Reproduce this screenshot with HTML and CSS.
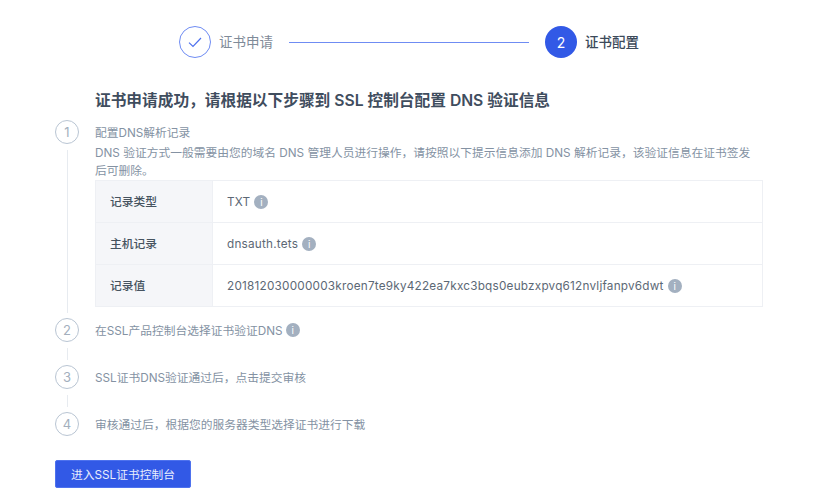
FILE: index.html
```html
<!DOCTYPE html>
<html lang="zh-CN">
<head>
<meta charset="utf-8">
<title>证书配置</title>
<link rel="stylesheet" href="styles.css">
</head>
<body>
<div class="stepper">
  <div class="stage stage-done">
    <span class="stage-dot">
      <svg class="check" viewBox="0 0 14 11" width="14" height="11"><path d="M1 5.6 L5 9.4 L13 1" fill="none" stroke="#4d70ee" stroke-width="1.2"/></svg>
    </span>
    <span class="stage-label">证书申请</span>
  </div>
  <div class="stage-line"></div>
  <div class="stage stage-active">
    <span class="stage-dot">2</span>
    <span class="stage-label">证书配置</span>
  </div>
</div>
<main class="content">
  <h1 class="title">证书申请成功，请根据以下步骤到 SSL 控制台配置 DNS 验证信息</h1>
  <ol class="steps">
    <li class="step step-first">
      <div class="rail"><span class="num">1</span><span class="conn"></span></div>
      <div class="body">
        <div class="step-head">配置DNS解析记录</div>
        <p class="desc">DNS 验证方式一般需要由您的域名 DNS 管理人员进行操作，请按照以下提示信息添加 DNS 解析记录，该验证信息在证书签发后可删除。</p>
        <table class="records">
          <tr><th>记录类型</th><td>TXT<i class="info">i</i></td></tr>
          <tr><th>主机记录</th><td>dnsauth.tets<i class="info">i</i></td></tr>
          <tr><th>记录值</th><td>201812030000003kroen7te9ky422ea7kxc3bqs0eubzxpvq612nvljfanpv6dwt<i class="info">i</i></td></tr>
        </table>
      </div>
    </li>
    <li class="step">
      <div class="rail"><span class="num">2</span><span class="conn"></span></div>
      <div class="body"><div class="step-head">在SSL产品控制台选择证书验证DNS<i class="info">i</i></div></div>
    </li>
    <li class="step">
      <div class="rail"><span class="num">3</span><span class="conn"></span></div>
      <div class="body"><div class="step-head">SSL证书DNS验证通过后，点击提交审核</div></div>
    </li>
    <li class="step step-last">
      <div class="rail"><span class="num">4</span></div>
      <div class="body"><div class="step-head">审核通过后，根据您的服务器类型选择证书进行下载</div></div>
    </li>
  </ol>
  <button class="primary" type="button">进入SSL证书控制台</button>
</main>
</body>
</html>
```
FILE: styles.css
```css
* { box-sizing: border-box; }
html, body { margin: 0; padding: 0; background: #fff; }
body {
  width: 835px;
  height: 500px;
  overflow: hidden;
  font-family: Inter, "Noto Sans CJK SC", sans-serif;
  font-size: 11.75px;
  color: #8492a3;
}
.stepper {
  display: flex;
  align-items: center;
  height: 32px;
  margin-top: 26px;
  padding-left: 179px;
}
.stage { display: flex; align-items: center; gap: 8px; }
.stage-dot {
  width: 32px;
  height: 32px;
  border-radius: 50%;
  display: flex;
  align-items: center;
  justify-content: center;
  font-size: 14px;
}
.stage-done .stage-dot { border: 1px solid #6f8cf3; }
.stage-active .stage-dot { background: #3259e6; color: #fff; }
.stage-label { font-size: 13.5px; width: 54px; white-space: nowrap; padding-bottom: 2px; }
.stage-done .stage-label { color: #7f8b99; }
.stage-active .stage-label { color: #3c4a5a; font-weight: 500; }
.stage-line { width: 240px; height: 1px; background: #6f8cf3; margin: 0 16px; }
.content { padding-left: 55px; }
.title {
  margin: 0 0 9px 40px;
  padding-top: 33px;
  font-size: 15.7px;
  line-height: 20px;
  font-weight: 600;
  color: #3f4d5e;
}
.steps { list-style: none; margin: 0; padding: 0; width: 708px; }
.step { display: flex; gap: 16px; height: 47px; }
.step-first { height: 198px; }
.rail {
  width: 24px;
  display: flex;
  flex-direction: column;
  align-items: center;
}
.num {
  flex: none;
  width: 24px;
  height: 24px;
  border: 1px solid #b9c5d3;
  border-radius: 50%;
  display: flex;
  align-items: center;
  justify-content: center;
  font-size: 13px;
  color: #a3afbd;
}
.conn { flex: 1; width: 1px; background: #e7ebf0; margin: 6px 0 5px; }
.body { flex: 1; min-width: 0; }
.step-head { line-height: 23px; padding-top: 2px; display: flex; align-items: center; }
.step-head .info { margin-left: 3px; margin-bottom: 3px; }
.desc { margin: -1px 0 0; width: 660px; line-height: 18px; }
.records {
  width: 668px;
  border-collapse: collapse;
  table-layout: fixed;
}
.records th, .records td {
  height: 42px;
  padding: 0 14px;
  border: 1px solid #eef0f4;
  text-align: left;
  font-size: 11.75px;
}
.records th {
  width: 117px;
  padding-bottom: 2px;
  background: #f5f6f9;
  color: #46535f;
  font-weight: 500;
}
.records td { color: #5c6875; letter-spacing: .22px; }
.info {
  display: inline-block;
  vertical-align: 0;
  width: 14px;
  height: 14px;
  margin-left: 4px;
  border-radius: 50%;
  background: #a3b0c0;
  color: #fff;
  font-size: 10px;
  line-height: 14px;
  text-align: center;
  font-style: normal;
  letter-spacing: 0;
}
.primary {
  display: block;
  width: 136px;
  height: 28px;
  margin-top: 1px;
  padding: 0 0 2px;
  border: 1px solid #4e72ee;
  border-radius: 2px;
  background: #3259e6;
  color: #e8edfd;
  font: inherit;
}
```
